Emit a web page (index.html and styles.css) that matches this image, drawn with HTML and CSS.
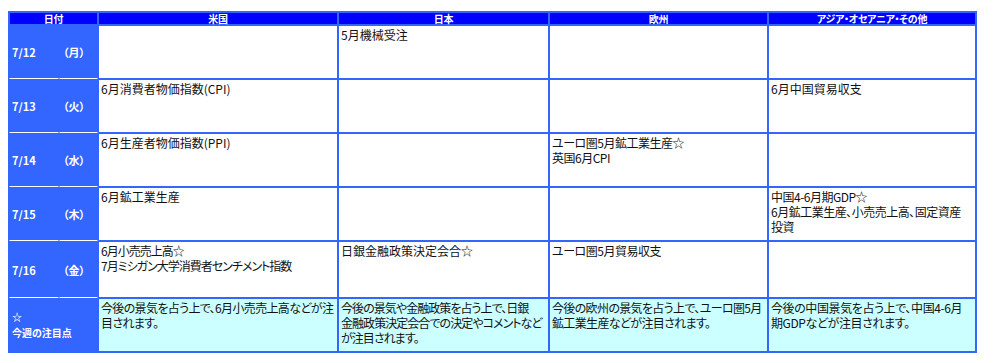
FILE: index.html
```html
<!DOCTYPE html>
<html lang="ja">
<head>
<meta charset="utf-8">
<title>今週の主な経済指標</title>
<link rel="stylesheet" href="styles.css">
</head>
<body>
<table class="cal">
  <colgroup>
    <col class="c-date"><col class="c-day"><col class="c-us"><col class="c-jp"><col class="c-eu"><col class="c-as">
  </colgroup>
  <thead>
    <tr><th colspan="2">日付</th><th>米国</th><th>日本</th><th>欧州</th><th>アジア・オセアニア・その他</th></tr>
  </thead>
  <tbody>
    <tr>
      <th class="date">7/12</th><th class="date day">（月）</th>
      <td></td><td>5月機械受注</td><td></td><td></td>
    </tr>
    <tr>
      <th class="date">7/13</th><th class="date day">（火）</th>
      <td>6月消費者物価指数(CPI)</td><td></td><td></td><td>6月中国貿易収支</td>
    </tr>
    <tr>
      <th class="date">7/14</th><th class="date day">（水）</th>
      <td>6月生産者物価指数(PPI)</td><td></td><td class="tight">ユーロ圏5月鉱工業生産☆<br>英国6月CPI</td><td></td>
    </tr>
    <tr>
      <th class="date">7/15</th><th class="date day">（木）</th>
      <td>6月鉱工業生産</td><td></td><td></td><td class="tight">中国4-6月期GDP☆<br>6月鉱工業生産、小売売上高、固定資産<br>投資</td>
    </tr>
    <tr class="tall">
      <th class="date">7/16</th><th class="date day">（金）</th>
      <td class="kana">6月小売売上高☆<br>7月ミシガン大学消費者センチメント指数</td><td>日銀金融政策決定会合☆</td><td class="tight">ユーロ圏5月貿易収支</td><td></td>
    </tr>
    <tr class="focus">
      <th colspan="2" class="label">☆<br>今週の注目点</th>
      <td>今後の景気を占う上で、6月小売売上高などが注<br>目されます。</td>
      <td class="narrow">今後の景気や金融政策を占う上で、日銀<br>金融政策決定会合での決定やコメントなど<br>が注目されます。</td>
      <td>今後の欧州の景気を占う上で、ユーロ圏5月<br>鉱工業生産などが注目されます。</td>
      <td class="loose">今後の中国景気を占う上で、中国4-6月<br>期GDPなどが注目されます。</td>
    </tr>
  </tbody>
</table>
</body>
</html>
```
FILE: styles.css
```css
body {
  margin: 11px 8px;
  background: #ffffff;
  font-family: "Noto Sans CJK JP", "Noto Sans", sans-serif;
}

.cal {
  border-collapse: separate;
  border-spacing: 0;
  border: 1px solid #3366ff;
  table-layout: fixed;
  width: 969px;
  background: #ffffff;
  font-feature-settings: "palt";
}

.c-date { width: 50px; }
.c-day { width: 39px; }
.c-us { width: 240px; }
.c-jp { width: 211px; }
.c-eu { width: 219px; }
.c-as { width: 208px; }

.cal th,
.cal td {
  border: 1px solid #3366ff;
  box-sizing: border-box;
  padding: 0;
}

.cal thead th {
  background: #0000ff;
  color: #ffffff;
  font-size: 10px;
  font-weight: bold;
  line-height: 11px;
  height: 13px;
  text-align: center;
  white-space: nowrap;
  letter-spacing: -0.3px;
}

.cal tbody tr { height: 54px; }
.cal tbody tr.tall { height: 57px; }

.cal td {
  vertical-align: top;
  padding: 1px 2px;
  font-size: 12px;
  line-height: 15px;
  color: #111111;
  white-space: nowrap;
}

.cal td.tight { letter-spacing: -0.5px; }
.cal td.kana { letter-spacing: -1px; }

.cal .date {
  background: #3366ff;
  color: #ffffff;
  font-size: 11px;
  font-weight: bold;
  text-align: left;
  vertical-align: middle;
  padding-left: 2px;
  border-bottom-color: #ffffff;
}

.cal .day { padding-left: 3px; }

.cal .label {
  background: #3366ff;
  color: #ffffff;
  font-size: 10px;
  font-weight: bold;
  line-height: 16px;
  text-align: left;
  vertical-align: middle;
  padding-left: 2px;
}

.focus td {
  background: #ccffff;
  letter-spacing: -0.65px;
}

.focus td.narrow { letter-spacing: -0.95px; }
.focus td.loose { letter-spacing: -0.4px; }
```
